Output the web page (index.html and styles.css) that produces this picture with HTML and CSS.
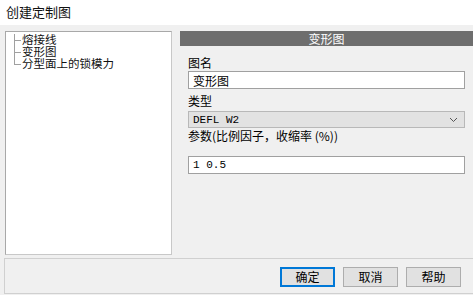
FILE: index.html
```html
<!DOCTYPE html>
<html lang="zh">
<head>
    <meta charset="UTF-8">
    <title>创建定制图</title>
    <link rel="stylesheet" href="styles.css">
</head>
<body>
    <div class="titlebar">创建定制图</div>
    <div class="main">
        <div class="tree">
            <div class="item">熔接线</div>
            <div class="item">变形图</div>
            <div class="item last">分型面上的锁模力</div>
        </div>
        <div class="panel">
            <div class="panel-head">变形图</div>
            <div class="form">
                <label class="lbl-first">图名</label>
                <input class="field" type="text" value="变形图">
                <label>类型</label>
                <div class="select">
                    <span class="mono">DEFL W2</span>
                    <svg width="9" height="6" viewBox="0 0 9 6"><path d="M1 1 L4.5 4.5 L8 1" fill="none" stroke="#555" stroke-width="1"/></svg>
                </div>
                <label class="lbl-params">参数(比例因子，收缩率 (%))</label>
                <input class="field mono params" type="text" value="1 0.5">
            </div>
        </div>
    </div>
    <div class="footer">
        <button class="btn default">确定</button>
        <button class="btn">取消</button>
        <button class="btn">帮助</button>
    </div>
</body>
</html>
```
FILE: styles.css
```css
body {
    margin: 0;
    width: 473px;
    height: 295px;
    background: #f0f0f0;
    font-family: "Noto Sans CJK SC", "Noto Sans", sans-serif;
    font-size: 12px;
    color: #000;
    overflow: hidden;
}
.titlebar {
    height: 25px;
    background: #ffffff;
    padding-left: 6px;
    font-size: 13px;
    line-height: 24px;
    color: #111;
}
.main {
    display: flex;
    padding: 6px 0 0 5px;
    height: 227px;
}
.tree {
    width: 165px;
    height: 220px;
    background: #ffffff;
    border: 1px solid #a8a8a8;
    border-right-color: #c8c8c8;
    border-bottom-color: #c8c8c8;
    padding-top: 2px;
}
.item {
    position: relative;
    padding-left: 16px;
    font-family: "Liberation Sans", "Noto Sans CJK SC", sans-serif;
    font-size: 11.5px;
    line-height: 12px;
    height: 12px;
    color: #111;
}
.item::before {
    content: "";
    position: absolute;
    left: 8px;
    top: 0;
    bottom: 0;
    border-left: 1px solid #a0a0a0;
}
.item.last::before {
    bottom: 6px;
}
.item::after {
    content: "";
    position: absolute;
    left: 8px;
    top: 6px;
    width: 7px;
    border-top: 1px solid #a0a0a0;
}
.panel {
    margin-left: 8px;
    flex: 1;
}
.panel-head {
    height: 15px;
    background: #6e6e6e;
    color: #ffffff;
    text-align: center;
    line-height: 15px;
    font-size: 12px;
}
.form {
    padding: 0 8px 0 8px;
    display: flex;
    flex-direction: column;
}
label {
    display: block;
    line-height: 14px;
    margin: 5px 0 3px;
}
.lbl-first {
    margin-top: 10px;
    margin-bottom: 1px;
}
.lbl-params {
    margin-top: 1px;
}
.field {
    box-sizing: border-box;
    width: 277px;
    height: 18px;
    border: 1px solid #a0a0a0;
    background: #fff;
    font-family: "Noto Sans CJK SC", sans-serif;
    font-size: 12px;
    padding: 0 4px;
    margin: 0;
    outline: none;
}
.mono {
    font-family: "Liberation Mono", "DejaVu Sans Mono", monospace;
    font-size: 11px;
}
.select {
    box-sizing: border-box;
    width: 277px;
    height: 17px;
    border: 1px solid #b8b8b8;
    background: #e2e2e2;
    display: flex;
    justify-content: space-between;
    align-items: center;
    padding: 0 6px 0 4px;
}
.params {
    margin-top: 10px;
}
.footer {
    box-sizing: border-box;
    margin-left: 4px;
    height: 36px;
    border: 1px solid #d0d0d0;
    border-right: none;
    display: flex;
    justify-content: flex-end;
    align-items: center;
    gap: 8px;
    padding-right: 12px;
    padding-top: 1px;
}
.btn {
    width: 55px;
    height: 20px;
    background: #e1e1e1;
    border: 1px solid #adadad;
    font-family: "Noto Sans CJK SC", sans-serif;
    font-size: 12px;
    padding: 0;
    line-height: 16px;
}
.btn.default {
    border: 1px solid #0078d7;
    box-shadow: inset 0 0 0 1px #0078d7;
}
```
